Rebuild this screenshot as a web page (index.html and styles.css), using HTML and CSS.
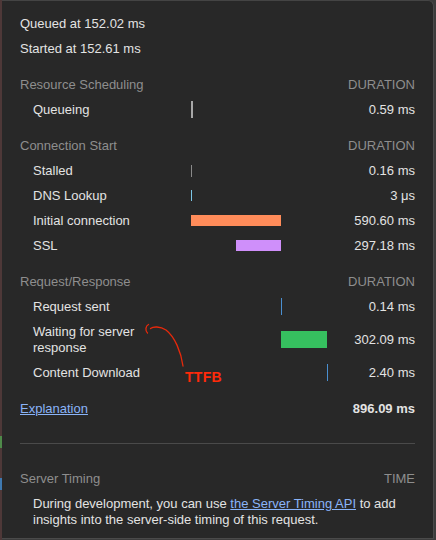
FILE: index.html
```html
<!DOCTYPE html>
<html>
<head>
<meta charset="utf-8">
<link rel="stylesheet" href="styles.css">
</head>
<body>
<div class="edge">
  <div class="seg seg-brown1"></div>
  <div class="seg seg-green"></div>
  <div class="seg seg-brown2"></div>
  <div class="seg seg-blue"></div>
  <div class="seg seg-brown3"></div>
</div>
<div class="panel">
  <div class="meta">
    <div class="line">Queued at 152.02 ms</div>
    <div class="line">Started at 152.61 ms</div>
  </div>

  <div class="section">
    <div class="head"><span>Resource Scheduling</span><span>DURATION</span></div>
    <div class="row">
      <div class="label">Queueing</div>
      <div class="track"><div class="tick tick-queue" style="margin-left:0px"></div></div>
      <div class="value">0.59 ms</div>
    </div>
  </div>

  <div class="section">
    <div class="head"><span>Connection Start</span><span>DURATION</span></div>
    <div class="row">
      <div class="label">Stalled</div>
      <div class="track"><div class="tick tick-stalled" style="margin-left:0px"></div></div>
      <div class="value">0.16 ms</div>
    </div>
    <div class="row">
      <div class="label">DNS Lookup</div>
      <div class="track"><div class="tick tick-dns" style="margin-left:0px"></div></div>
      <div class="value">3 μs</div>
    </div>
    <div class="row">
      <div class="label">Initial connection</div>
      <div class="track"><div class="bar bar-orange" style="margin-left:0px;width:90px"></div></div>
      <div class="value">590.60 ms</div>
    </div>
    <div class="row">
      <div class="label">SSL</div>
      <div class="track"><div class="bar bar-purple" style="margin-left:45px;width:45px"></div></div>
      <div class="value">297.18 ms</div>
    </div>
  </div>

  <div class="section">
    <div class="head"><span>Request/Response</span><span>DURATION</span></div>
    <div class="row">
      <div class="label">Request sent</div>
      <div class="track"><div class="tick tick-blue" style="margin-left:90px"></div></div>
      <div class="value">0.14 ms</div>
    </div>
    <div class="row row-tall">
      <div class="label">Waiting for server<br>response</div>
      <div class="track"><div class="bar bar-green" style="margin-left:90px;width:46px"></div></div>
      <div class="value">302.09 ms</div>
    </div>
    <div class="row">
      <div class="label">Content Download</div>
      <div class="track"><div class="tick tick-blue" style="margin-left:136px"></div></div>
      <div class="value">2.40 ms</div>
    </div>
    <svg class="ttfb-arrow" width="60" height="60" viewBox="0 0 60 60">
      <path d="M5.5 2.5 C2.5 4 2 8.5 4.5 11" fill="none" stroke="#e8290b" stroke-width="1.3" stroke-linecap="round"/>
      <path d="M7.5 6.5 C10 4.5 17 4 23 8 C32 15 38 30 40 44" fill="none" stroke="#e8290b" stroke-width="1.3" stroke-linecap="round"/>
    </svg>
    <div class="ttfb">TTFB</div>
  </div>

  <div class="total">
    <a class="link" href="#">Explanation</a>
    <span class="total-value">896.09 ms</span>
  </div>

  <div class="divider"></div>

  <div class="section server">
    <div class="head"><span>Server Timing</span><span>TIME</span></div>
    <p class="note">During development, you can use <a class="link" href="#">the Server Timing API</a> to add insights into the server-side timing of this request.</p>
  </div>
</div>
</body>
</html>
```

FILE: styles.css
```css
html, body {
  margin: 0;
  padding: 0;
}
body {
  width: 436px;
  height: 540px;
  display: flex;
  align-items: flex-start;
  background: #3c3c3c;
  font-family: "Liberation Sans", Arial, sans-serif;
  font-size: 13px;
  color: #e3e3e3;
  overflow: hidden;
}
.edge {
  width: 2px;
  height: 540px;
  display: flex;
  flex-direction: column;
}
.seg { width: 2px; }
.seg-brown1 { height: 436px; background: #4e3838; }
.seg-green { height: 12px; background: #4f8a4a; }
.seg-brown2 { height: 30px; background: #4e3838; }
.seg-blue { height: 12px; background: #3f79b0; }
.seg-brown3 { flex: 1; background: #4e3838; }

.panel {
  position: relative;
  width: 432px;
  height: 539px;
  flex: none;
  background: #282828;
  border-top: 1px solid #444444;
  border-right: 1px solid #4a4a4a;
  border-bottom: 1px solid #4a4a4a;
  border-top-right-radius: 6px;
  box-sizing: border-box;
  padding: 10px 18px 0 18px;
}
.meta .line {
  line-height: 16px;
  padding: 4.5px 0;
}
.section {
  position: relative;
  margin-top: 12px;
}
.head {
  display: flex;
  justify-content: space-between;
  color: #8e8e8e;
  line-height: 16px;
  padding: 4px 0;
}
.row {
  display: grid;
  grid-template-columns: 158px 137px 1fr;
  padding-left: 13px;
  line-height: 16px;
}
.label {
  padding: 4.5px 0;
}
.value {
  text-align: right;
  padding: 4.5px 0;
  align-self: center;
}
.track {
  display: flex;
  align-items: center;
}
.tick {
  width: 1px;
  height: 17px;
  flex: none;
}
.tick-queue { width: 2px; background: #a8a8a8; }
.tick-stalled { height: 12px; background: #8a8a8a; }
.tick-dns { height: 11px; background: #7cc6e6; }
.tick-blue { background: #4a8fd0; }
.bar { height: 11px; flex: none; }
.bar-orange { background: #ff8c5a; }
.bar-purple { background: #cf8ffa; }
.bar-green { height: 17px; background: #36c05f; }

.ttfb-arrow {
  position: absolute;
  left: 123px;
  top: 52px;
}
.ttfb {
  position: absolute;
  left: 165px;
  top: 99px;
  color: #ff2a0a;
  font-weight: bold;
  font-size: 14px;
  letter-spacing: 0.3px;
}

.total {
  display: flex;
  justify-content: space-between;
  margin-top: 12px;
  line-height: 16px;
  padding: 4px 0;
}
.link {
  color: #8ab4f8;
  text-decoration: underline;
}
.total-value {
  font-weight: bold;
}
.divider {
  height: 1px;
  background: #4a4a4a;
  margin-top: 22px;
}
.server {
  margin-top: 23px;
}
.note {
  margin: 0;
  padding: 4.5px 0 0 13px;
  line-height: 16px;
}
```
